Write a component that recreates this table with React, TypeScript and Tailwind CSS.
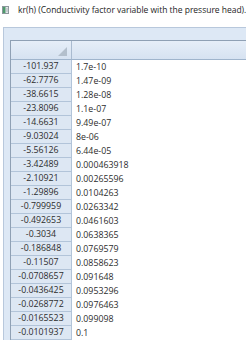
const rows: [string, string][] = [
  ["-101.937", "1.7e-10"],
  ["-62.7776", "1.47e-09"],
  ["-38.6615", "1.28e-08"],
  ["-23.8096", "1.1e-07"],
  ["-14.6631", "9.49e-07"],
  ["-9.03024", "8e-06"],
  ["-5.56126", "6.44e-05"],
  ["-3.42489", "0.000463918"],
  ["-2.10921", "0.00265596"],
  ["-1.29896", "0.0104263"],
  ["-0.799959", "0.0263342"],
  ["-0.492653", "0.0461603"],
  ["-0.3034", "0.0638365"],
  ["-0.186848", "0.0769579"],
  ["-0.11507", "0.0858623"],
  ["-0.0708657", "0.091648"],
  ["-0.0436425", "0.0953296"],
  ["-0.0268772", "0.0976463"],
  ["-0.0165523", "0.099098"],
  ["-0.0101937", "0.1"],
];

function TableIcon() {
  return (
    <svg width="7" height="8" viewBox="0 0 7 8" className="shrink-0">
      <rect x="0.5" y="0.5" width="6" height="7" fill="#e4e8ea" stroke="#8d979c" />
      <rect x="1" y="1" width="2.5" height="6" fill="#4f9a6c" />
      <line x1="3.5" y1="3" x2="6.5" y2="3" stroke="#a9b1b5" />
      <line x1="3.5" y1="5" x2="6.5" y2="5" stroke="#a9b1b5" />
    </svg>
  );
}

export default function App() {
  return (
    <div className="w-[246px] h-[340px] overflow-hidden bg-white font-['Open_Sans',sans-serif] text-[#2d2d2d]">
      <div className="flex h-[20px] items-center pl-[2px]">
        <TableIcon />
        <span className="ml-[9px] whitespace-nowrap text-[8.5px] leading-none tracking-[-0.02px] text-[#1e1e1e]">
          kr(h) (Conductivity factor variable with the pressure head).
        </span>
      </div>

      <div className="ml-[3px] mt-[7px] border-l border-t border-[#b8c8dc] bg-[#dde8f5] pl-[6px] pt-[12px]">
        <div className="border-l border-t border-[#8fa0b4] bg-white">
          <div className="flex h-[19px] border-b border-[#9fb4cc] bg-gradient-to-b from-[#e6eef8] to-[#d6e2f1]">
            <div className="relative w-[61px] shrink-0 border-r border-[#aabbd0]">
              <div className="absolute bottom-[3px] right-[4px] h-0 w-0 border-b-[9px] border-l-[9px] border-b-[#b3bfcc] border-l-transparent" />
            </div>
            <div className="flex-1" />
          </div>
          {rows.map(([h, k]) => (
            <div key={h} className="flex h-[14px] text-[8.8px] leading-none">
              <div className="flex w-[61px] shrink-0 items-center justify-center whitespace-nowrap border-b border-r border-[#b2c4d9] bg-[#dde7f3]">
                {h}
              </div>
              <div className="flex flex-1 items-center pl-[4px]">{k}</div>
            </div>
          ))}
        </div>
      </div>
    </div>
  );
}
